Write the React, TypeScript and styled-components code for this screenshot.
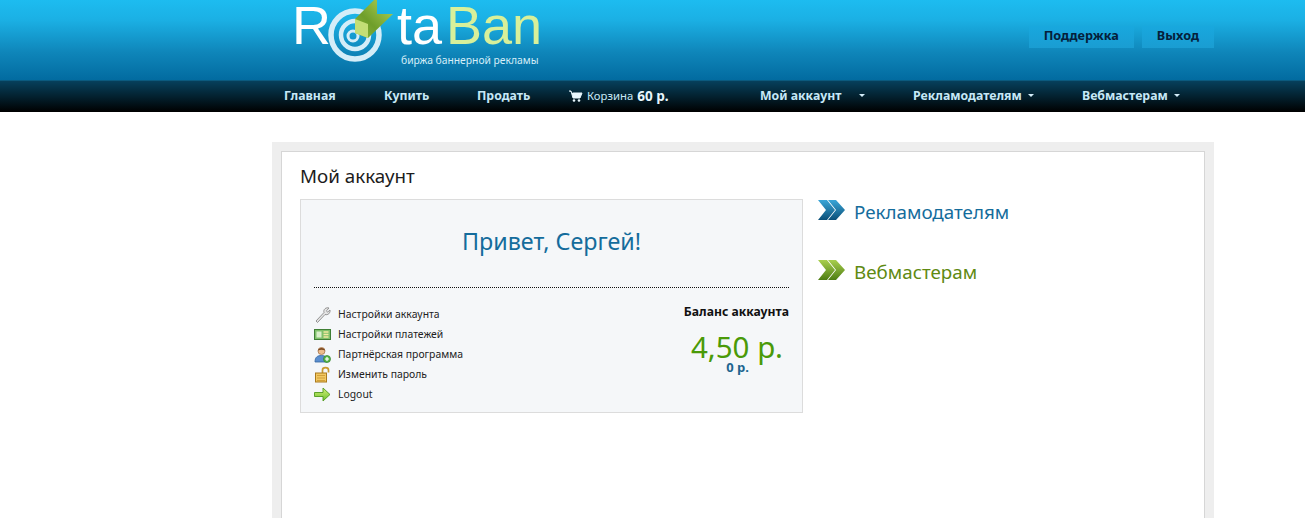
import styled, { createGlobalStyle } from 'styled-components';

const GlobalStyle = createGlobalStyle`
    html, body {
        margin: 0;
        padding: 0;
        background: #fff;
        font-family: "Noto Sans", "DejaVu Sans", sans-serif;
    }
`;

const Header = styled.header`
    height: 80px;
    box-sizing: border-box;
    padding: 0 91px 0 293px;
    display: flex;
    justify-content: space-between;
    background: linear-gradient(to bottom, #1dbcf0 0%, #1bb0e4 25%, #0f86ba 65%, #026ba0 100%);
`;

const LogoBox = styled.svg`
    display: block;
    width: 260px;
    height: 70px;
`;

const TopButtons = styled.div`
    display: flex;
    gap: 8px;
    padding-top: 26px;
`;

const TopButton = styled.a`
    height: 22px;
    padding: 0 15px;
    background: linear-gradient(to bottom, #18a8de, #1a9dd2);
    color: #05203a;
    font-size: 12.7px;
    font-weight: 700;
    line-height: 19px;
`;

const Nav = styled.nav`
    height: 32px;
    box-sizing: border-box;
    padding: 0 0 2px 284px;
    display: flex;
    align-items: center;
    border-top: 1px solid #0b5a7e;
    background: linear-gradient(to bottom, #06405c 0%, #03212f 50%, #000 100%);
`;

const NavItem = styled.a<{ $w: number }>`
    flex: 0 0 ${p => p.$w}px;
    display: flex;
    align-items: center;
    color: #c6e8f7;
    font-size: 12.3px;
    font-weight: 700;
    white-space: nowrap;
`;

const CartLabel = styled.span`
    font-size: 11.3px;
    font-weight: 400;
    margin: 0 4px 0 4px;
`;

const CartTotal = styled.span`
    color: #e8f6fc;
    font-size: 13.5px;
`;

const Caret = styled.i<{ $gap: number }>`
    width: 0;
    height: 0;
    margin-left: ${p => p.$gap}px;
    border: 3px solid transparent;
    border-top-color: #d4edf9;
    border-bottom-width: 0;
`;

const Page = styled.main`
    margin: 30px 91px 0 272px;
    padding: 9px 9px 0;
    background: #eeeeee;
`;

const Sheet = styled.div`
    height: 367px;
    box-sizing: border-box;
    padding: 12px 18px 0;
    background: #fff;
    border: 1px solid #d6d6d6;
    border-bottom: 0;
`;

const Title = styled.h1`
    margin: 0 0 10px;
    color: #1c1c1c;
    font-size: 18.8px;
    font-weight: 400;
    line-height: 25px;
`;

const Columns = styled.div`
    display: flex;
    gap: 15px;
`;

const AccountCard = styled.section`
    width: 503px;
    height: 214px;
    box-sizing: border-box;
    padding: 0 13px;
    background: #f5f7f9;
    border: 1px solid #dcdcdc;
`;

const Greeting = styled.h2`
    height: 88px;
    box-sizing: border-box;
    margin: 0 0 16px;
    padding-top: 25px;
    border-bottom: 1px dotted #111;
    color: #146c9c;
    font-size: 23.3px;
    font-weight: 400;
    line-height: 32px;
    text-align: center;
`;

const CardBody = styled.div`
    display: flex;
    justify-content: space-between;
`;

const LinkList = styled.ul`
    margin: 0;
    padding: 0;
    list-style: none;
`;

const LinkRow = styled.li`
    height: 20px;
    display: flex;
    align-items: center;
    gap: 7px;
    color: #222;
    font-size: 10.4px;
`;

const IconSlot = styled.svg`
    display: block;
    width: 17px;
    height: 17px;
`;

const Balance = styled.div`
    text-align: right;
`;

const BalanceLabel = styled.div`
    color: #111;
    font-size: 12.2px;
    font-weight: 700;
    line-height: 16px;
`;

const BalanceValue = styled.div`
    margin: 11px 6px 0 0;
    color: #4a9a08;
    font-size: 29.5px;
    line-height: 32px;
`;

const BalanceSub = styled.div`
    margin: -2px 40px 0 0;
    color: #1d6590;
    font-size: 13px;
    font-weight: 700;
    line-height: 12px;
`;

const Sections = styled.div`
    display: flex;
    flex-direction: column;
    gap: 32px;
`;

const SectionLink = styled.a<{ $color: string }>`
    height: 28px;
    display: flex;
    align-items: flex-start;
    gap: 9px;
    color: ${p => p.$color};
    font-size: 18.8px;
    line-height: 26px;
`;

const Logo = () => (
    <LogoBox viewBox="0 0 260 70">
        <defs>
            <linearGradient id="arrowFill" x1="1" y1="0" x2="0" y2="1">
                <stop offset="0" stopColor="#b4d65a" />
                <stop offset="0.6" stopColor="#6f9e2a" />
                <stop offset="1" stopColor="#8db83c" />
            </linearGradient>
        </defs>
        <text x="-1" y="44" fontFamily="'Liberation Sans', sans-serif" fontSize="54" fill="#fff">R</text>
        <circle cx="62" cy="35" r="24" fill="none" stroke="#d4edf8" strokeWidth="5.5" />
        <circle cx="62" cy="35" r="14" fill="none" stroke="#d4edf8" strokeWidth="4.5" />
        <circle cx="60" cy="36" r="5" fill="none" stroke="#d4edf8" strokeWidth="3" />
        <path d="M81 0 L84 0 L84 14 L100 14 L75 38 L62 33 L62 19 Z" fill="url(#arrowFill)" />
        <path d="M62 19 L75 24 L75 38 L62 33 Z" fill="#c3de76" />
        <text x="104" y="44" fontFamily="'Liberation Sans', sans-serif" fontSize="54" fill="#fff">ta</text>
        <text x="153" y="44" fontFamily="'Liberation Sans', sans-serif" fontSize="54" fill="#d8f09a">Ban</text>
        <text x="108" y="64" fontFamily="'Noto Sans', sans-serif" fontSize="10.3" fill="#d6eef8">биржа баннерной рекламы</text>
    </LogoBox>
);

const CartIcon = () => (
    <svg width="14" height="12" viewBox="0 0 14 12">
        <path d="M0 1h2l2 7h7l2-5H4" fill="#e8f6fc" stroke="#e8f6fc" strokeWidth="1" />
        <circle cx="5" cy="10.5" r="1.3" fill="#e8f6fc" />
        <circle cx="10" cy="10.5" r="1.3" fill="#e8f6fc" />
    </svg>
);

const WrenchIcon = () => (
    <IconSlot viewBox="0 0 17 17">
        <path d="M2 15 L10 6.5 C9 3.5 12 1 15 2 L12.5 4.8 L13.5 6.2 L16 4 C16.5 7 14 9.5 11 8.5 L3.5 16.5 Z" fill="#e4e4e4" stroke="#8a8a8a" strokeWidth="0.9" />
    </IconSlot>
);

const CardIcon = () => (
    <IconSlot viewBox="0 0 17 17">
        <rect x="0.5" y="3.5" width="16" height="10" fill="#7fc06a" stroke="#3f7f35" />
        <rect x="2.5" y="5.5" width="5" height="6" fill="#d9efc9" />
        <path d="M9.5 6h5M9.5 8.5h5M9.5 11h5" stroke="#f4e9a0" strokeWidth="1.3" />
    </IconSlot>
);

const PartnerIcon = () => (
    <IconSlot viewBox="0 0 17 17">
        <path d="M1 16 C1 11 3.5 9.5 7.5 9.5 C11 9.5 13 11 13 16 Z" fill="#5b8fd0" stroke="#34659f" strokeWidth="0.8" />
        <circle cx="7.5" cy="5" r="3.5" fill="#eebd8c" stroke="#a8764a" strokeWidth="0.8" />
        <path d="M4 4.5 C4 1 11 1 11 4.5 C9 3.5 6 3.5 4 4.5 Z" fill="#7a4a22" />
        <circle cx="13" cy="13" r="3.5" fill="#5cb84a" stroke="#2f7f2a" strokeWidth="0.7" />
        <path d="M13 11v4M11 13h4" stroke="#fff" strokeWidth="1.2" />
    </IconSlot>
);

const LockIcon = () => (
    <IconSlot viewBox="0 0 17 17">
        <path d="M8.5 7 V4 C8.5 0.8 14.5 0.8 14.5 4 V6.5" fill="none" stroke="#c99a2e" strokeWidth="1.7" />
        <rect x="1.5" y="7" width="11" height="9" fill="#f2c861" stroke="#a9791c" />
        <path d="M3 9.5h8M3 12h8M3 14.5h8" stroke="#c9952f" strokeWidth="0.8" />
    </IconSlot>
);

const ArrowIcon = () => (
    <IconSlot viewBox="0 0 17 17">
        <defs>
            <linearGradient id="logoutFill" x1="0" y1="0" x2="0" y2="1">
                <stop offset="0" stopColor="#d6f07a" />
                <stop offset="1" stopColor="#6cc02c" />
            </linearGradient>
        </defs>
        <path d="M0.5 6.5 H9 V2 L16 8.5 L9 15 V10.5 H0.5 Z" fill="url(#logoutFill)" stroke="#4f9a1c" strokeWidth="0.9" />
    </IconSlot>
);

const Chevrons = ({ from, to }: { from: string; to: string }) => (
    <svg width="27" height="22" viewBox="0 0 27 22">
        <defs>
            <linearGradient id={`chev${from.slice(1)}`} x1="0" y1="0" x2="0" y2="1">
                <stop offset="0" stopColor={from} />
                <stop offset="1" stopColor={to} />
            </linearGradient>
        </defs>
        <path d="M0 1 H9 L17 11 L9 21 H0 L8 11 Z" fill={`url(#chev${from.slice(1)})`} />
        <path d="M10 1 H18 L27 11 L18 21 H10 L18 11 Z" fill={`url(#chev${from.slice(1)})`} />
    </svg>
);

const accountLinks = [
    { label: 'Настройки аккаунта', icon: <WrenchIcon /> },
    { label: 'Настройки платежей', icon: <CardIcon /> },
    { label: 'Партнёрская программа', icon: <PartnerIcon /> },
    { label: 'Изменить пароль', icon: <LockIcon /> },
    { label: 'Logout', icon: <ArrowIcon /> },
];

export default function App() {
    return (
        <>
            <GlobalStyle />
            <Header>
                <Logo />
                <TopButtons>
                    <TopButton>Поддержка</TopButton>
                    <TopButton>Выход</TopButton>
                </TopButtons>
            </Header>
            <Nav>
                <NavItem $w={100}>Главная</NavItem>
                <NavItem $w={93}>Купить</NavItem>
                <NavItem $w={92}>Продать</NavItem>
                <NavItem $w={191}>
                    <CartIcon />
                    <CartLabel>Корзина</CartLabel>
                    <CartTotal>60 р.</CartTotal>
                </NavItem>
                <NavItem $w={153}>Мой аккаунт<Caret $gap={18} /></NavItem>
                <NavItem $w={169}>Рекламодателям<Caret $gap={6} /></NavItem>
                <NavItem $w={110}>Вебмастерам<Caret $gap={6} /></NavItem>
            </Nav>
            <Page>
                <Sheet>
                    <Title>Мой аккаунт</Title>
                    <Columns>
                        <AccountCard>
                            <Greeting>Привет, Сергей!</Greeting>
                            <CardBody>
                                <LinkList>
                                    {accountLinks.map(link => (
                                        <LinkRow key={link.label}>
                                            {link.icon}
                                            {link.label}
                                        </LinkRow>
                                    ))}
                                </LinkList>
                                <Balance>
                                    <BalanceLabel>Баланс аккаунта</BalanceLabel>
                                    <BalanceValue>4,50 р.</BalanceValue>
                                    <BalanceSub>0 р.</BalanceSub>
                                </Balance>
                            </CardBody>
                        </AccountCard>
                        <Sections>
                            <SectionLink $color="#146c9c">
                                <Chevrons from="#3aa6d8" to="#0b4f78" />
                                Рекламодателям
                            </SectionLink>
                            <SectionLink $color="#5f8a12">
                                <Chevrons from="#a9cf4e" to="#4d7d12" />
                                Вебмастерам
                            </SectionLink>
                        </Sections>
                    </Columns>
                </Sheet>
            </Page>
        </>
    );
}
